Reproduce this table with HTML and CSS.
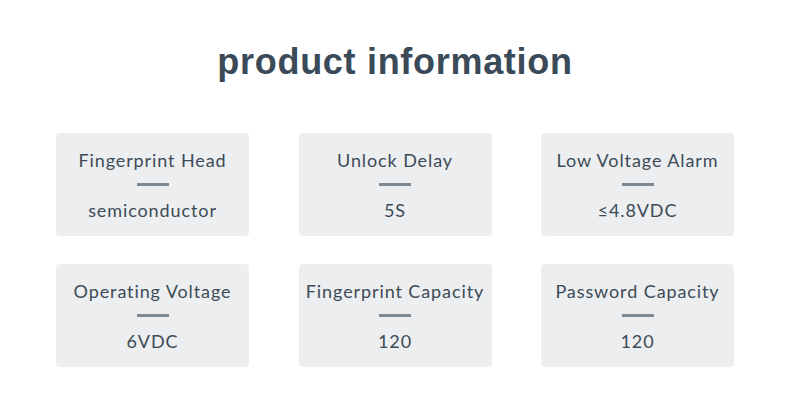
FILE: index.html
```html
<!DOCTYPE html>
<html>
<head>
<meta charset="utf-8">
<link rel="stylesheet" href="styles.css">
</head>
<body>
<main class="page">
  <h1 class="title">product information</h1>
  <section class="grid">
    <div class="card"><div class="label">Fingerprint Head</div><div class="rule"></div><div class="value">semiconductor</div></div>
    <div class="card"><div class="label">Unlock Delay</div><div class="rule"></div><div class="value">5S</div></div>
    <div class="card"><div class="label">Low Voltage Alarm</div><div class="rule"></div><div class="value">≤4.8VDC</div></div>
    <div class="card"><div class="label">Operating Voltage</div><div class="rule"></div><div class="value">6VDC</div></div>
    <div class="card"><div class="label">Fingerprint Capacity</div><div class="rule"></div><div class="value">120</div></div>
    <div class="card"><div class="label">Password Capacity</div><div class="rule"></div><div class="value">120</div></div>
  </section>
</main>
</body>
</html>
```

FILE: styles.css
```css
html, body {
  margin: 0;
  padding: 0;
  background: #ffffff;
}
.page {
  width: 790px;
  height: 408px;
  display: flex;
  flex-direction: column;
  align-items: center;
  padding-top: 40px;
  box-sizing: border-box;
}
.title {
  margin: 0;
  font-family: "Liberation Sans", Arial, sans-serif;
  font-weight: bold;
  font-size: 36px;
  line-height: 44px;
  color: #3a4a58;
  letter-spacing: 0.7px;
}
.grid {
  margin-top: 49px;
  display: grid;
  grid-template-columns: repeat(3, 193px);
  column-gap: 49.5px;
  row-gap: 28px;
}
.card {
  height: 103px;
  background: #eceef0;
  border-radius: 4px;
  display: flex;
  flex-direction: column;
  align-items: center;
  justify-content: center;
  font-family: Lato, "Open Sans", sans-serif;
  font-size: 18px;
  letter-spacing: 0.9px;
  color: #3d4b57;
}
.label {
  line-height: 22px;
}
.rule {
  width: 32px;
  height: 3px;
  background: #7d8891;
  margin: 12px 0 13px;
}
.value {
  line-height: 22px;
}
```
